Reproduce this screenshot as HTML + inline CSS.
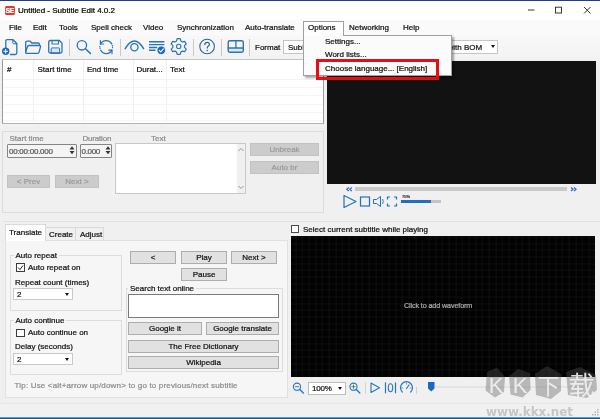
<!DOCTYPE html>
<html><head><meta charset="utf-8">
<style>
html,body{margin:0;padding:0;}
body{width:600px;height:419px;overflow:hidden;background:#f0f0f0;position:relative;font-family:"Liberation Sans","Noto Sans CJK SC",sans-serif;font-size:8px;color:#111;}
.a{position:absolute;white-space:nowrap;line-height:11px;-webkit-text-stroke:0.22px currentColor;}
.bx{position:absolute;box-sizing:border-box;}
.btn{position:absolute;box-sizing:border-box;background:#e1e1e1;border:1px solid #adadad;text-align:center;font-size:8px;line-height:11px;white-space:nowrap;color:#111;-webkit-text-stroke:0.22px currentColor;}
.dis{background:#cccccc;border-color:#c2c2c2;color:#9a9a9a;}
.grp{position:absolute;box-sizing:border-box;border:1px solid #dcdcdc;}
.inp{position:absolute;box-sizing:border-box;background:#fff;border:1px solid #7a7a7a;}
.sep{position:absolute;width:1px;background:#c9c9c9;}
svg{position:absolute;overflow:visible;}
</style></head><body><div id="root" style="position:absolute;left:0;top:0;width:600px;height:419px;overflow:hidden;background:#f0f0f0;will-change:transform;">

<!-- title bar -->
<div class="bx" style="left:0;top:0;width:600px;height:20px;background:#fff;border-top:1px solid #1d3f8f;"></div>
<div class="bx" style="left:4.500px;top:6px;width:10.500px;height:9px;background:#e03a2e;border-radius:1.500px;"></div>
<div class="a" style="left:4.500px;top:6px;width:10.500px;text-align:center;color:#fff;font-size:7px;font-weight:bold;line-height:9px;letter-spacing:-0.5px;">SE</div>
<div class="a" id="title" style="left:18px;top:5px;font-size:8px;color:#000;">Untitled - Subtitle Edit 4.0.2</div>
<svg style="left:520px;top:4px" width="80" height="14" viewBox="0 0 80 14" fill="none" stroke="#222" stroke-width="0.9">
<path d="M8 6h6.500"/><rect x="35.500" y="3.200" width="6" height="5.800"/><path d="M64 3l6.500 6.500M70.500 3l-6.500 6.500"/></svg>

<!-- menu bar -->
<div class="bx" style="left:0;top:20px;width:600px;height:16px;background:#fafafa;"></div>
<div class="bx" style="left:303px;top:20.500px;width:41px;height:15.500px;background:#fdfdfd;border:1px solid #9e9e9e;border-bottom:none;"></div>
<div class="a m" style="top:22.300px;left:9px;">File</div>
<div class="a m" style="top:22.300px;left:33px;">Edit</div>
<div class="a m" style="top:22.300px;left:59px;">Tools</div>
<div class="a m" style="top:22.300px;left:91px;">Spell check</div>
<div class="a m" style="top:22.300px;left:143px;">Video</div>
<div class="a m" style="top:22.300px;left:177px;">Synchronization</div>
<div class="a m" style="top:22.300px;left:245px;">Auto-translate</div>
<div class="a m" style="top:22.300px;left:308px;">Options</div>
<div class="a m" style="top:22.300px;left:349px;">Networking</div>
<div class="a m" style="top:22.300px;left:403px;">Help</div>

<!-- toolbar -->
<div class="bx" style="left:0;top:36px;width:600px;height:24px;background:linear-gradient(#f8f8f8,#f2f2f2);"></div>
<svg style="left:0;top:36px" width="260" height="23" viewBox="0 0 260 23" fill="none" stroke="#2b73b8" stroke-width="1.3" stroke-linecap="round" stroke-linejoin="round">
<!-- new -->
<path d="M5.800 11.500V5.200q0-1.500 1.500-1.500h5.700l3.800 3.800V17q0 1.500-1.500 1.500H10.500"/><path d="M12.800 4v2.800q0 1 1 1h2.800" stroke-width="1"/>
<circle cx="5.700" cy="15.300" r="3.700" fill="#1c69b8" stroke="none"/><path d="M3.800 15.300h3.800M5.700 13.400v3.800" stroke="#fff" stroke-width="1"/>
<!-- open -->
<path d="M25.700 15.500V6.500q0-1.300 1.300-1.300h3.200l1.600 1.800h6.300q1.300 0 1.300 1.300v1"/><path d="M25.700 16l1.700-5.300q0.400-1.200 1.600-1.200h10.400q1.500 0 1.100 1.400l-1.400 5.100q-0.400 1.300-1.600 1.300h-10.700q-1.400 0-1.100-1.300z"/>
<!-- save -->
<path d="M51.200 17v-4.300q0-0.800 0.800-0.800h6.800q0.800 0 0.800 0.800v4.300z" fill="#d5e6f6" stroke-width="1"/>
<path d="M48.700 6q0-1.500 1.500-1.500h9.200l2.600 2.600v8.400q0 1.500-1.500 1.500h-10.300q-1.500 0-1.500-1.500z"/><path d="M52 4.700v3.300h6.500v-3.300" stroke-width="1.100"/>
<!-- search -->
<circle cx="81.900" cy="9.300" r="4.700"/><path d="M85.400 12.800l5 4.600" stroke-width="1.500"/>
<!-- refresh -->
<path d="M111.700 7.900A6.300 6.300 0 0 0 100.500 8.200" stroke-width="1.300"/><path d="M100.400 4.600V8H103.600" stroke-width="1.200"/>
<path d="M100.700 14.300A6.300 6.300 0 0 0 111.900 14" stroke-width="1.300"/><path d="M112 17.600V14.200H108.800" stroke-width="1.200"/>
<path d="M112.300 9.500A6.300 6.300 0 0 1 112.400 12.500M100.100 12.700A6.300 6.300 0 0 1 100 9.700" stroke-dasharray="0.500 1.300" stroke-width="1.100"/>
<!-- eye -->
<path d="M125.200 12.700q9.200-15.400 18.400 0" stroke-width="1.500"/><circle cx="134.400" cy="11.300" r="3.600" stroke-width="1.300"/>
<!-- list check -->
<path d="M149 5.700h15.400M149 8.600h15.400M149 11.500h8M149 14.300h6.500" stroke-width="1.400" stroke-linecap="butt"/>
<circle cx="161.300" cy="14.300" r="4.300" fill="#1c69b8" stroke="#f5f5f5" stroke-width="0.800"/><path d="M159.300 14.300l1.500 1.600l2.600-3" stroke="#fff" stroke-width="1.100"/>
<!-- gear -->
<path d="M177.200 2.700h3l0.700 2.300l1.500 0.900l2.300-0.600l1.500 2.600l-1.700 1.700v1.800l1.700 1.700l-1.500 2.600l-2.300-0.600l-1.500 0.900l-0.700 2.300h-3l-0.700-2.300l-1.500-0.900l-2.300 0.600l-1.500-2.600l1.700-1.700v-1.800l-1.700-1.700l1.500-2.600l2.300 0.600l1.500-0.900z" stroke-width="1.200"/><circle cx="178.700" cy="10.500" r="2.200" stroke-width="1.100"/>
<!-- help -->
<circle cx="207.100" cy="10.500" r="7.300" stroke="#2a6699" stroke-width="1.100"/><path d="M204.800 8.600q0-2.300 2.400-2.300q2.200 0 2.200 2q0 1.200-1.200 1.900q-1 0.600-1 1.900" stroke="#2a6699" stroke-width="1.200"/><circle cx="207.200" cy="14.500" r="0.800" fill="#2a6699" stroke="none"/>
<!-- layout -->
<path d="M228.200 12h15.100v3q0 1.200-1.200 1.200h-12.700q-1.200 0-1.200-1.200z" fill="#dbe9f7" stroke="none"/>
<rect x="228.200" y="4.800" width="15.100" height="11.400" rx="1.600" stroke-width="1.400"/><path d="M228.200 12h15.100M235.900 4.800v7.200" stroke-width="1.300"/>
</svg>
<div class="sep" style="left:69px;top:38.500px;height:17px;"></div>
<div class="sep" style="left:120.200px;top:38.500px;height:17px;"></div>
<div class="sep" style="left:192.500px;top:38.500px;height:17px;"></div>
<div class="sep" style="left:220.800px;top:38.500px;height:17px;"></div>
<div class="sep" style="left:249.300px;top:38.500px;height:17px;"></div>
<div class="a" style="left:255px;top:42px;">Format</div>
<div class="inp" style="left:283px;top:40px;width:215px;height:14px;border-color:#c5c5c5;"></div>
<div class="a" style="left:288px;top:42px;">SubRip (.srt)</div>
<div class="a" style="left:447.500px;top:42px;">with BOM</div>
<div class="bx" style="left:490.700px;top:45.300px;width:0;height:0;border-left:2.800px solid transparent;border-right:2.800px solid transparent;border-top:3.500px solid #111;"></div>

<!-- list view -->
<div class="bx" style="left:2px;top:59px;width:321.500px;height:64.500px;background:#fff;border:1px solid #9a9a9a;border-top-color:#c4c4c4;border-bottom-color:#b5b5b5;"></div>
<div class="a" style="left:7px;top:63.500px;">#</div>
<div class="a" style="left:37.500px;top:63.500px;">Start time</div>
<div class="a" style="left:87px;top:63.500px;">End time</div>
<div class="a" style="left:136.500px;top:63.500px;">Durat...</div>
<div class="a" style="left:170px;top:63.500px;">Text</div>
<div class="sep" style="left:33px;top:60px;height:62px;background:#f0f0f0;"></div>
<div class="sep" style="left:82.500px;top:60px;height:62px;background:#f0f0f0;"></div>
<div class="sep" style="left:132.500px;top:60px;height:62px;background:#f0f0f0;"></div>
<div class="sep" style="left:166px;top:60px;height:62px;background:#f0f0f0;"></div>
<div class="bx" style="left:3px;top:78.700px;width:319px;height:1px;background:#f3f3f3;"></div>
<div class="bx" style="left:3px;top:87px;width:319px;height:1px;background:#f5f5f5;"></div>
<div class="bx" style="left:3px;top:95.300px;width:319px;height:1px;background:#f5f5f5;"></div>
<div class="bx" style="left:3px;top:103.600px;width:319px;height:1px;background:#f5f5f5;"></div>
<div class="bx" style="left:3px;top:112px;width:319px;height:1px;background:#f5f5f5;"></div>
<div class="bx" style="left:3px;top:120.300px;width:319px;height:1px;background:#f5f5f5;"></div>

<!-- edit group -->
<div class="grp" style="left:2px;top:130.500px;width:321.500px;height:82.500px;"></div>
<div class="a" style="left:9.500px;top:133px;color:#8a8a8a;">Start time</div>
<div class="a" style="left:82.500px;top:133px;color:#8a8a8a;letter-spacing:-0.2px;">Duration</div>
<div class="a" style="left:151px;top:133px;color:#8a8a8a;">Text</div>
<div class="inp" style="left:6.500px;top:143.600px;width:70.500px;height:14px;background:#f4f4f4;border-color:#858585;border-radius:1px;"></div>
<div class="a" style="left:9px;top:145.500px;color:#555;letter-spacing:-0.25px;">00:00:00.000</div>
<div class="inp" style="left:79.500px;top:143.600px;width:32px;height:14px;background:#f4f4f4;border-color:#858585;border-radius:1px;"></div>
<div class="a" style="left:81.500px;top:145.500px;color:#555;letter-spacing:-0.3px;">0.000</div>
<svg style="left:69px;top:146px" width="6" height="9" fill="#333"><path d="M0.500 3.500L3 0.300L5.500 3.500zM0.500 5L3 8.200L5.500 5z"/></svg>
<svg style="left:104.500px;top:146px" width="6" height="9" fill="#333"><path d="M0.500 3.500L3 0.300L5.500 3.500zM0.500 5L3 8.200L5.500 5z"/></svg>
<div class="inp" style="left:115px;top:143px;width:131px;height:51px;border-color:#c8c8c8;"></div>
<div class="bx" style="left:236.500px;top:144px;width:8.500px;height:49px;background:#f0f0f0;"></div>
<svg style="left:236.500px;top:146px" width="8" height="46" fill="none" stroke="#8a8a8a" stroke-width="0.9"><path d="M1.5 5l2.5-2.5L6.5 5M1.5 40l2.5 2.5L6.500 40"/></svg>
<div class="btn dis" style="left:7px;top:175px;width:43px;height:13px;">&lt; Prev</div>
<div class="btn dis" style="left:55px;top:175px;width:44px;height:13px;">Next &gt;</div>
<div class="btn dis" style="left:250px;top:143px;width:69px;height:13px;">Unbreak</div>
<div class="btn dis" style="left:250px;top:161px;width:69px;height:13px;">Auto br</div>

<!-- video -->
<div class="bx" style="left:327px;top:60.700px;width:269.300px;height:123.800px;background:#121212;"></div>
<div class="bx" style="left:354.500px;top:187px;width:212.500px;height:3.500px;background:#c9c9c9;"></div>
<svg style="left:346px;top:186.500px" width="7" height="5" fill="none" stroke="#2f72b3" stroke-width="1.300"><path d="M2.800 0.500L0.800 2.300L2.800 4.100M5.800 0.500L3.800 2.300L5.800 4.100"/></svg>
<svg style="left:569.500px;top:186.500px" width="7" height="5" fill="none" stroke="#2f72b3" stroke-width="1.300"><path d="M1 0.500L3 2.300L1 4.100M4 0.500L6 2.300L4 4.100"/></svg>
<svg style="left:340px;top:193px" width="110" height="18" fill="none" stroke="#2272b9" stroke-width="1.2">
<path d="M4 2.5v12l12-6z" stroke-linejoin="round"/>
<rect x="20.500" y="4" width="9" height="9"/>
<path d="M33.500 6.500h3l4-3v10l-4-3h-3z" stroke-linejoin="round" stroke-width="1"/><path d="M42.500 6q1.500 2.500 0 5" stroke-width="0.9"/>
<path d="M47.500 6.500v-2.500h2.500M54 4h2.500v2.500M56.500 10.500v2.500h-2.500M50 13h-2.500v-2.500" stroke-width="1.200"/>
</svg>
<div class="bx" style="left:400.500px;top:200.200px;width:40.300px;height:2.800px;background:#c4c4c4;"></div>
<div class="bx" style="left:400.500px;top:200.200px;width:30.300px;height:2.800px;background:#1f6fbf;"></div>
<div class="a" style="left:402px;top:194.300px;font-size:4px;line-height:6px;color:#333;">75%</div>

<!-- bottom left tabs -->
<div class="bx" style="left:2px;top:221px;width:598px;height:1px;background:#e2e2e2;"></div>
<div class="bx" style="left:2px;top:221px;width:1px;height:182px;background:#ececec;"></div>
<div class="bx" style="left:5px;top:240px;width:283px;height:157.500px;background:#f6f6f6;border:1px solid #e0e0e0;"></div>
<div class="bx" style="left:5px;top:224px;width:41px;height:17px;background:#fff;border:1px solid #dadada;border-bottom:none;"></div>
<div class="bx" style="left:46px;top:227px;width:30px;height:13px;border:1px solid #dadada;border-left:none;border-bottom:none;"></div>
<div class="bx" style="left:76px;top:227px;width:28px;height:13px;border:1px solid #dadada;border-left:none;border-bottom:none;"></div>
<div class="a" style="left:9px;top:227px;">Translate</div>
<div class="a" style="left:49px;top:229px;">Create</div>
<div class="a" style="left:80px;top:229px;">Adjust</div>

<div class="grp" style="left:10px;top:255px;width:112px;height:56px;"></div>
<div class="a" style="left:13.500px;top:249.500px;background:#f6f6f6;padding:0 2px;">Auto repeat</div>
<div class="inp" style="left:16px;top:263px;width:8.500px;height:8.500px;border-color:#3c3c3c;"></div>
<svg style="left:16px;top:263px" width="9" height="9" fill="none" stroke="#222" stroke-width="1"><path d="M2 4.500l2 2l3-4"/></svg>
<div class="a" style="left:28px;top:262px;">Auto repeat on</div>
<div class="a" style="left:15px;top:277px;">Repeat count (times)</div>
<div class="inp" style="left:13px;top:288.200px;width:59.700px;height:12.300px;border-color:#c9c9c9;"></div>
<div class="a" style="left:17px;top:289px;">2</div>
<div class="bx" style="left:65px;top:293px;width:0;height:0;border-left:2.800px solid transparent;border-right:2.800px solid transparent;border-top:3px solid #111;"></div>

<div class="grp" style="left:10px;top:320px;width:112px;height:55px;"></div>
<div class="a" style="left:13.500px;top:314.700px;background:#f6f6f6;padding:0 2px;">Auto continue</div>
<div class="inp" style="left:16px;top:328.500px;width:8.500px;height:8.500px;border-color:#3c3c3c;"></div>
<div class="a" style="left:28px;top:327px;">Auto continue on</div>
<div class="a" style="left:15px;top:341px;">Delay (seconds)</div>
<div class="inp" style="left:13px;top:352.800px;width:59.700px;height:12.500px;border-color:#c9c9c9;"></div>
<div class="a" style="left:17px;top:353.700px;">2</div>
<div class="bx" style="left:65px;top:357.700px;width:0;height:0;border-left:2.800px solid transparent;border-right:2.800px solid transparent;border-top:3px solid #111;"></div>
<div class="a" style="left:14.600px;top:380px;color:#8c8c8c;letter-spacing:0.17px;">Tip: Use &lt;alt+arrow up/down&gt; to go to previous/next subtitle</div>

<div class="btn" style="left:130px;top:251px;width:46px;height:13px;">&lt;</div>
<div class="btn" style="left:181px;top:251px;width:46px;height:13px;">Play</div>
<div class="btn" style="left:231px;top:251px;width:46px;height:13px;">Next &gt;</div>
<div class="btn" style="left:181px;top:268px;width:46px;height:13px;">Pause</div>
<div class="grp" style="left:126px;top:288px;width:157px;height:84px;"></div>
<div class="a" style="left:128px;top:283px;background:#f6f6f6;padding:0 2px;">Search text online</div>
<div class="inp" style="left:128px;top:294px;width:151px;height:24px;"></div>
<div class="btn" style="left:128px;top:322px;width:74px;height:13px;">Google it</div>
<div class="btn" style="left:206px;top:322px;width:73px;height:13px;">Google translate</div>
<div class="btn" style="left:128px;top:340px;width:151px;height:13px;">The Free Dictionary</div>
<div class="btn" style="left:128px;top:356px;width:151px;height:13px;">Wikipedia</div>

<!-- waveform -->
<div class="inp" style="left:290.500px;top:225px;width:8px;height:8px;border-color:#4a4a4a;"></div>
<div class="a" style="left:303px;top:223.600px;">Select current subtitle while playing</div>
<div class="bx" style="left:291px;top:235.700px;width:304px;height:140.900px;background-color:#020202;background-image:repeating-linear-gradient(90deg,transparent 0,transparent 5.667px,#0f0f0f 5.667px,#0f0f0f 6.667px),repeating-linear-gradient(0deg,transparent 0,transparent 5.667px,#0f0f0f 5.667px,#0f0f0f 6.667px);background-position:-1.400px 0,0 -0.500px;"></div>
<div class="a" style="left:404px;top:300px;color:#a8a8a8;font-size:7.200px;letter-spacing:-0.12px;">Click to add waveform</div>

<!-- waveform toolbar -->
<svg style="left:290px;top:380px" width="130" height="16" viewBox="0 0 130 16" fill="none" stroke="#2a76bd" stroke-width="1.1" stroke-linecap="round" stroke-linejoin="round">
<circle cx="7" cy="6.700" r="3.600"/><path d="M9.800 9.500l3.500 3.500" stroke-width="1.400"/><path d="M5.300 6.700h3.400" stroke-width="0.900"/>
<circle cx="63.500" cy="6.700" r="3.600"/><path d="M66.300 9.500l3.500 3.500" stroke-width="1.400"/><path d="M61.800 6.700h3.400M63.500 5v3.400" stroke-width="0.900"/>
<path d="M81 3v9.500l8.500-4.750z"/>
<path d="M95.500 2.800v10M105.500 2.800v10" stroke-width="1.200"/><ellipse cx="100.500" cy="7.800" rx="2.200" ry="4" stroke-width="1.100"/>
<path d="M112.300 12a6 6 0 1 1 8.400 0" stroke-width="1.200"/><path d="M116.500 8.500l2.500-3.500" stroke-width="1.200"/><path d="M111.800 8h1M120.200 8h1M116.500 3.200v1" stroke-width="0.700"/>
</svg>
<div class="sep" style="left:364.500px;top:382px;height:12px;background:#d4d4d4;"></div>
<div class="sep" style="left:415.500px;top:387px;height:7px;background:#cfcfcf;"></div>
<div class="inp" style="left:307.500px;top:381.500px;width:38px;height:13px;border-color:#bdbdbd;"></div>
<div class="a" style="left:312px;top:383px;letter-spacing:-0.2px;">100%</div>
<div class="bx" style="left:338px;top:387px;width:0;height:0;border-left:2.500px solid transparent;border-right:2.500px solid transparent;border-top:3px solid #111;"></div>
<div class="bx" style="left:435px;top:386px;width:158px;height:2px;background:#e4e4e4;"></div>
<div class="bx" style="left:428px;top:382px;width:6.500px;height:9.500px;background:#1a68c0;clip-path:polygon(0 0,100% 0,100% 68%,50% 100%,0 68%);"></div>

<!-- status bar -->
<div class="bx" style="left:0;top:403px;width:600px;height:14px;background:#f1f1f1;border-top:1px solid #e6e6e6;"></div>
<div class="bx" style="left:0;top:416.500px;width:600px;height:2.500px;background:linear-gradient(#a9cde6,#0d5c8e 60%,#0b4f7c);"></div>
<svg style="left:592px;top:408px" width="8" height="8" fill="#b5b5b5"><rect x="5" y="1" width="1.500" height="1.500"/><rect x="2.500" y="3.500" width="1.500" height="1.500"/><rect x="5" y="3.500" width="1.500" height="1.500"/><rect x="0" y="6" width="1.500" height="1.500"/><rect x="2.500" y="6" width="1.500" height="1.500"/><rect x="5" y="6" width="1.500" height="1.500"/></svg>

<!-- watermark -->
<svg style="left:480px;top:360px" width="120" height="59" viewBox="0 0 120 59">
<g fill="rgba(87,87,87,0.36)">
<path d="M7 12l10-4.500l8 9.500l-1 15l-9 5.500l-9.500-7z"/>
<path d="M29 16l9-7l12 4l0.500 17l-8 7.500l-12-3z"/>
<path d="M55 14l12-8l14 8v17l-10 8l-15-4z"/>
<path d="M86 12l14-5l16 8l1 15l-10 8l-19-3z"/>
</g>
<g fill="#f2f2f2" fill-opacity="0.9" font-family="'Liberation Sans','Noto Sans CJK SC',sans-serif" font-size="24" text-anchor="middle">
<text x="16" y="32.500" font-size="22">K</text>
<text x="40" y="32.500" font-size="22">K</text>
<text x="68.500" y="34" font-size="22">下</text>
<text x="101.500" y="35" font-size="26">载</text>
</g>
<text x="6" y="56" fill="#c6c6c6" font-family="'DejaVu Sans','Liberation Sans',sans-serif" font-weight="bold" font-size="11.500" textLength="87" lengthAdjust="spacingAndGlyphs">www.kkx.net</text>
</svg>

<!-- dropdown menu -->
<div class="bx" style="left:303px;top:35px;width:148.500px;height:41px;background:#fbfbfb;border:1px solid #a0a0a0;box-shadow:1.500px 1.500px 2px rgba(0,0,0,.35);"></div>
<div class="bx" style="left:304px;top:35px;width:39px;height:1px;background:#fff;"></div>
<div class="a" style="left:325px;top:36.300px;">Settings...</div>
<div class="a" style="left:325px;top:49px;">Word lists...</div>
<div class="a" style="left:325px;top:63px;">Choose language... [English]</div>
<div class="bx" style="left:315.500px;top:59.300px;width:123.500px;height:21.200px;border:3px solid #e60d14;"></div>

</div></body></html>
